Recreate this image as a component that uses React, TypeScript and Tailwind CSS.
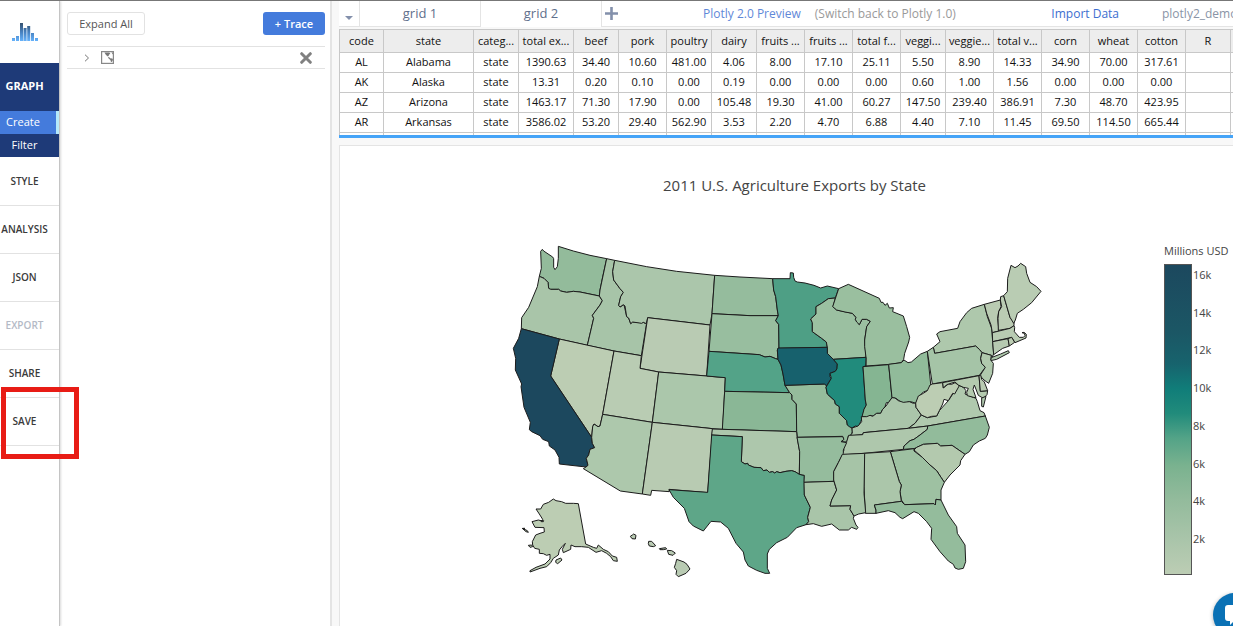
import React from "react";

const columns: { name: string; width: number }[] = [
  { name: "code", width: 44 },
  { name: "state", width: 90 },
  { name: "categ...", width: 45 },
  { name: "total ex...", width: 55 },
  { name: "beef", width: 45 },
  { name: "pork", width: 48 },
  { name: "poultry", width: 45 },
  { name: "dairy", width: 45 },
  { name: "fruits ...", width: 48 },
  { name: "fruits ...", width: 48 },
  { name: "total f...", width: 48 },
  { name: "veggi...", width: 45 },
  { name: "veggie...", width: 48 },
  { name: "total v...", width: 48 },
  { name: "corn", width: 48 },
  { name: "wheat", width: 48 },
  { name: "cotton", width: 48 },
  { name: "R", width: 45 },
  { name: "", width: 45 },
];

const rows: string[][] = [
  ["AL", "Alabama", "state", "1390.63", "34.40", "10.60", "481.00", "4.06", "8.00", "17.10", "25.11", "5.50", "8.90", "14.33", "34.90", "70.00", "317.61", "", ""],
  ["AK", "Alaska", "state", "13.31", "0.20", "0.10", "0.00", "0.19", "0.00", "0.00", "0.00", "0.60", "1.00", "1.56", "0.00", "0.00", "0.00", "", ""],
  ["AZ", "Arizona", "state", "1463.17", "71.30", "17.90", "0.00", "105.48", "19.30", "41.00", "60.27", "147.50", "239.40", "386.91", "7.30", "48.70", "423.95", "", ""],
  ["AR", "Arkansas", "state", "3586.02", "53.20", "29.40", "562.90", "3.53", "2.20", "4.70", "6.88", "4.40", "7.10", "11.45", "69.50", "114.50", "665.44", "", ""],
  Array(19).fill(""),
];

type Shape = { id: string; fill: string; d: string };
type Region = { shift: string; shapes: Shape[] };

// Each region keeps its outlines in local coordinates; `shift` moves it onto the map.
const regions: Region[] = [
  {
    shift: "translate(0 0)",
    shapes: [
      { id: "WA", fill: "#93bb9b", d: "M122,64 127,58 131,63 158,81 161,86 161,112 165,119 172,110 175,85 175,49 220,63 270,76 320,86 307,145 300,180 298,198 240,186 220,184 200,187 182,183 176,178 152,178 146,175 144,157 132,145 118,139 124,115Z" },
      { id: "OR", fill: "#a9c5a9", d: "M118,139 132,145 144,157 146,175 152,178 176,178 182,183 200,187 220,184 240,186 298,198 307,212 300,225 277,256 281,265 262,346 178,327 64,296 65,263 86,232 112,170Z" },
      { id: "ID", fill: "#a7c4a8", d: "M320,86 344,91 338,125 341,150 360,176 370,187 362,200 356,226 360,231 372,224 380,260 386,264 392,281 398,276 430,277 436,280 441,272 424,377 342,363 262,346 281,265 277,256 300,225 307,212 298,198 300,180Z" },
      { id: "MT", fill: "#abc6ab", d: "M344,91 440,110 530,124 644,136 636,251 630,285 443,263 439,281 430,277 425,280 398,276 392,281 386,264 380,260 375,228 370,224 360,231 356,226 362,200 370,187 360,176 341,150 338,125Z" },
      { id: "WY", fill: "#b9cbb3", d: "M443,263 630,285 620,438 476,426 420,415 433,330Z" },
      { id: "NV", fill: "#bccdb3", d: "M178,327 342,363 308,553 300,588 294,590 282,582 278,590 275,622 152,438Z" },
      { id: "UT", fill: "#b9ccb3", d: "M342,363 424,377 420,415 476,426 457,577 308,553Z" },
      { id: "CA", fill: "#1c485e", d: "M64,296 178,327 152,438 275,622 277,640 284,653 270,658 266,675 259,685 264,706 258,711 178,702 177,682 165,660 148,648 146,635 128,628 120,617 95,605 88,599 91,577 72,532 63,470 65,462 46,420 47,385 40,355 56,325Z" },
    ],
  },
  {
    shift: "translate(0 390)",
    shapes: [
      { id: "CO", fill: "#abc7ab", d: "M476,36 620,48 676,53 668,208 638,206 457,187Z" },
      { id: "AZ", fill: "#adc8ac", d: "M308,163 457,187 427,402 361,393 250,326 258,321 264,316 259,295 266,285 270,268 284,263 277,250 275,232 278,200 282,192 294,200 300,198Z" },
      { id: "NM", fill: "#b8cbb2", d: "M457,187 638,206 623,398 507,388 508,395 455,391 452,406 427,402Z" },
      { id: "AK", fill: "#bccdb3", d: "M108,447 122,447 130,433 146,427 160,417 168,422 185,425 197,430 220,430 235,431 246,492 257,552 280,562 290,565 295,555 310,568 325,575 337,588 350,592 352,604 340,602 332,590 320,580 305,572 288,577 265,562 245,560 225,560 213,555 212,568 190,578 187,568 196,550 187,559 178,570 175,585 160,595 152,608 140,620 120,625 90,636 90,632 108,622 135,612 150,597 150,583 140,586 130,581 118,580 118,568 104,565 98,555 97,545 107,525 120,520 133,516 132,503 105,502 96,485 115,480 126,483 128,478 118,462ZM67,505 82,512 85,517 78,515ZM85,556 95,555 98,560 90,562ZM168,600 182,594 186,600 173,611 167,607ZM122,482 131,482 130,485 124,485ZM68,506 73,504 74,509Z" },
      { id: "HI", fill: "#b9cbb3", d: "M391,529 397,525 401,522 408,526 406,537 396,536ZM446,544 455,544 467,557 460,560 448,558 445,551ZM478,566 497,563 500,567 490,569 480,569ZM502,571 515,572 526,579 519,586 506,583ZM530,598 552,606 561,613 570,627 558,640 535,650 528,643 530,632 523,622 527,610Z" },
    ],
  },
  {
    shift: "translate(570 0)",
    shapes: [
      { id: "ND", fill: "#95bc9d", d: "M74,136 150,141 248,146 251,180 257,200 262,240 265,257 180,257 66,251Z" },
      { id: "SD", fill: "#98be9f", d: "M66,251 180,257 265,257 257,272 266,283 267,352 262,360 264,388 257,386 240,379 225,381 208,374 57,364Z" },
      { id: "NE", fill: "#53a388", d: "M57,364 208,374 225,381 240,379 257,386 264,388 273,405 279,432 285,466 299,488 104,484 106,443 50,438Z" },
      { id: "KS", fill: "#8ab796", d: "M104,484 299,488 306,495 306,508 319,522 320,605 97,598Z" },
      { id: "MN", fill: "#4e9f85", d: "M248,146 300,146 301,128 310,129 311,142 315,153 322,156 345,159 372,166 392,174 412,168 446,176 436,204 415,206 395,220 378,230 378,252 362,267 367,278 367,305 395,325 409,336 412,352 267,355 266,283 257,272 265,257 262,240 257,200 251,180Z" },
      { id: "WI", fill: "#9bc0a1", d: "M436,204 429,230 440,240 487,250 498,262 496,268 508,284 516,268 530,268 541,274 530,290 524,330 528,382 430,388 412,370 412,352 409,336 395,325 367,305 367,278 362,267 378,252 378,230 395,220 415,206Z" },
      { id: "MI", fill: "#9abf9f", d: "M446,176 475,163 568,205 573,217 579,217 585,226 592,220 598,234 610,233 608,245 640,258 650,290 659,322 656,336 644,370 641,388 634,398 600,403 528,408 528,382 524,350 524,330 530,290 541,274 530,268 516,268 508,284 500,276 496,268 498,262 487,250 465,246 440,240 428,230Z" },
      { id: "MO", fill: "#95bc9c", d: "M285,466 403,462 410,467 408,472 412,492 434,512 436,522 448,530 448,550 470,570 472,585 486,592 487,605 484,615 475,618 473,630 468,636 453,635 460,625 458,619 322,622 320,605 319,522 306,508 306,495 299,488Z" },
      { id: "IA", fill: "#17616d", d: "M264,354 412,352 412,370 430,388 442,402 441,416 436,424 420,430 420,440 424,445 410,467 403,462 285,466 279,432 273,405 264,388 262,360Z" },
      { id: "IL", fill: "#218b7c", d: "M430,388 528,382 527,408 519,410 526,510 529,525 522,538 518,560 512,575 506,590 496,588 486,594 478,590 472,585 470,572 448,550 448,530 436,522 434,512 412,492 408,472 424,445 420,430 436,424 441,416 442,402Z" },
      { id: "IN", fill: "#85b592", d: "M519,410 596,404 606,503 596,518 589,518 585,530 577,540 572,550 560,550 550,558 540,556 534,562 516,560 522,538 529,525 526,510Z" },
    ],
  },
  {
    shift: "translate(1140 0)",
    shapes: [
      { id: "OH", fill: "#91bb9a", d: "M26,403 64,398 72,390 84,398 94,396 122,372 142,364 152,462 147,480 130,486 118,498 112,512 107,520 96,516 88,515 78,518 65,518 48,505 36,503Z" },
      { id: "NY", fill: "#aec8ac", d: "M160,352 180,335 170,312 180,305 233,295 240,275 260,248 275,235 313,223 322,260 335,295 338,335 341,372 336,382 362,372 385,362 388,368 350,388 332,392 334,376 306,368 298,358 287,348 164,370Z" },
      { id: "PA", fill: "#a5c4a7", d: "M142,364 160,352 164,370 287,348 298,358 306,368 302,385 305,400 316,412 298,436 157,462Z" },
      { id: "NJ", fill: "#b0c9ad", d: "M306,368 334,376 332,390 340,400 338,430 326,460 312,450 300,437 316,412 305,400 302,385Z" },
      { id: "VT", fill: "#b9cbb2", d: "M313,223 361,210 363,230 356,245 353,265 357,303 337,308 333,285 320,250Z" },
      { id: "NH", fill: "#bacbb3", d: "M361,210 362,200 371,197 390,262 402,276 402,287 390,295 355,301 354,265 356,245 365,230Z" },
      { id: "ME", fill: "#b9ccb3", d: "M371,197 382,185 383,145 393,106 405,113 414,108 422,100 437,110 440,130 450,157 470,170 483,184 455,218 430,238 412,250 406,270 401,280 390,262Z" },
      { id: "MA", fill: "#b8cbb2", d: "M337,308 390,295 402,287 404,292 403,305 418,322 430,322 435,317 433,310 426,308 432,307 439,313 438,324 405,338 395,322 338,335Z" },
      { id: "CT", fill: "#b6cab1", d: "M338,335 384,326 388,348 368,355 341,374Z" },
      { id: "RI", fill: "#bccdb3", d: "M384,326 395,322 404,337 388,348Z" },
    ],
  },
  {
    shift: "translate(1020 420)",
    shapes: [
      { id: "KY", fill: "#aac5aa", d: "M156,83 165,84 175,92 190,97 208,95 220,100 227,99 228,112 244,135 225,160 205,175 70,188 68,194 28,198 37,190 36,174 54,168 65,155 64,140 80,140 90,136 98,139 110,130 122,130 128,118 138,108 145,98Z" },
      { id: "VA", fill: "#b0c9ae", d: "M205,175 225,160 244,135 262,143 290,138 298,122 325,92 345,62 355,45 370,52 378,62 375,72 400,82 408,85 412,95 420,122 432,128 436,138 263,168Z" },
      { id: "WV", fill: "#bccdb3", d: "M227,99 235,78 250,70 262,62 270,45 277,42 308,38 310,54 325,42 335,43 345,38 358,47 344,72 338,70 325,92 312,88 308,102 298,122 290,138 275,139 262,143 244,135 228,112Z" },
      { id: "MD", fill: "#b4caaf", d: "M308,38 417,17 421,64 443,62 441,74 430,85 415,76 403,45 399,58 408,83 400,82 382,77 380,67 385,55 370,52 355,45 345,36 320,44 310,54Z" },
      { id: "DE", fill: "#b9cbb2", d: "M417,17 422,15 425,28 433,36 443,62 421,64Z" },
      { id: "VA-shore", fill: "#b0c9ae", d: "M425,84 438,79 430,111 425,109Z" },
      { id: "TN", fill: "#aec7ac", d: "M26,196 68,194 70,188 205,175 263,168 262,178 240,195 222,208 210,212 192,228 190,238 72,250 5,255 12,240 9,230 20,215Z" },
      { id: "NC", fill: "#92bb9b", d: "M263,168 436,138 448,172 442,195 436,205 418,213 400,225 388,245 375,253 336,226 302,228 292,220 250,223 222,236 190,238 192,228 210,212 222,208 240,195 262,178Z" },
      { id: "SC", fill: "#b3c9ae", d: "M222,240 230,232 250,223 292,220 302,228 336,226 375,253 362,272 360,285 345,300 330,315 313,337 303,322 290,302 270,285 247,262Z" },
      { id: "GA", fill: "#9ec1a2", d: "M151,245 222,236 222,243 247,262 270,285 290,302 303,322 313,337 303,360 303,390 288,388 286,405 282,401 194,404 184,390 180,365 184,345 178,335Z" },
      { id: "AL", fill: "#abc6aa", d: "M73,250 151,245 178,335 184,345 180,365 184,394 103,405 108,422 108,430 76,430 72,350Z" },
      { id: "FL", fill: "#94bc9c", d: "M103,405 184,394 194,404 282,401 286,405 288,388 303,390 325,435 350,470 352,490 375,525 377,575 370,595 355,598 345,594 340,583 325,573 300,545 273,508 275,475 260,455 235,430 222,425 188,446 180,442 165,428 145,422 108,430 108,420Z" },
    ],
  },
  {
    shift: "translate(540 570)",
    shapes: [
      { id: "OK", fill: "#adc7ac", d: "M97,27 350,35 351,50 359,95 358,163 345,155 335,152 318,154 300,158 290,155 284,159 278,155 268,157 261,150 250,152 243,143 222,142 205,135 203,130 195,132 184,125 187,50 95,45Z" },
      { id: "TX", fill: "#5ea688", d: "M95,45 187,50 184,125 195,132 203,130 205,135 222,142 243,143 250,152 261,150 268,157 278,155 284,159 290,155 300,158 318,154 335,152 345,155 358,163 373,166 373,225 391,262 383,292 386,305 378,314 350,323 322,352 290,368 268,388 262,402 262,445 269,460 255,460 230,451 205,438 195,420 190,396 168,370 145,325 122,306 93,304 70,333 40,318 27,305 13,265 -20,232 -33,209 83,217Z" },
      { id: "AR", fill: "#95bc9d", d: "M351,52 488,50 492,58 483,65 500,68 490,90 490,100 475,128 461,155 461,180 462,184 372,187 373,166 358,163 359,95Z" },
      { id: "LA", fill: "#a9c5a9", d: "M372,187 462,184 470,210 455,240 450,258 512,257 510,268 522,288 520,295 528,315 534,322 530,328 515,322 505,330 478,330 455,312 425,319 400,311 378,314 386,305 383,292 391,262 373,225Z" },
      { id: "MS", fill: "#a6c4a7", d: "M487,103 554,100 552,220 557,278 536,282 522,288 510,268 512,257 450,258 455,240 470,210 461,180 461,155 475,128Z" },
    ],
  },
];

const ticks = ["16k", "14k", "12k", "10k", "8k", "6k", "4k", "2k"];

function Logo() {
  return (
    <svg viewBox="0 0 26 18" className="h-[18px] w-[26px]" aria-hidden="true">
      <defs>
        <linearGradient id="bars" gradientUnits="userSpaceOnUse" x1="0" y1="0" x2="0" y2="18">
          <stop offset="0" stopColor="#35516f" />
          <stop offset="0.5" stopColor="#4780be" />
          <stop offset="1" stopColor="#66b2fb" />
        </linearGradient>
      </defs>
      <path
        fill="url(#bars)"
        d="M0 15h3v3H0zM4 13h3v5H4zM8 0h3v18H8zM11.6 5h3v13h-3zM15.2 3h3v15h-3zM19 10h3v8h-3zM23 15h3v3h-3z"
      />
      <path fill="#9cc4ea" d="M11 6h.6v12H11zM14.6 6h.6v12h-.6z" />
    </svg>
  );
}

function NavItem({ label, muted = false, marked = false }: { label: string; muted?: boolean; marked?: boolean }) {
  return (
    <div className="relative h-12 w-full border-b border-[#e2e2e2]">
      <button
        type="button"
        disabled={muted}
        className={`flex h-full w-[49px] items-center justify-center text-[10px] font-semibold ${muted ? "text-[#b4bac6]" : "text-[#3a3a3a]"}`}
      >
        {label}
      </button>
      {marked && <span className="pointer-events-none absolute -top-[11px] left-px h-[72px] w-[78px] border-[5px] border-[#e81c15]" />}
    </div>
  );
}

function Sidebar() {
  return (
    <nav className="relative z-10 w-[60px] shrink-0 border-r border-[#c4c4c4] bg-white shadow-[1px_0_2px_rgba(0,0,0,0.15)]">
      <div className="flex h-[62px] items-center justify-center pr-[9px] pb-px">
        <Logo />
      </div>
      <button type="button" className="flex h-12 w-full items-center justify-center bg-[#1e3a78] pr-[10px] pb-0.5 text-[11px] font-bold text-white">
        GRAPH
      </button>
      <button type="button" className="flex h-[23px] w-full items-center justify-center border-r-[3px] border-[#b5e8fa] bg-[#447bdc] pr-[10px] text-[11px] text-white">
        Create
      </button>
      <button type="button" className="flex h-[23px] w-full items-center justify-center bg-[#1e3a78] pr-[10px] text-[11px] text-white">
        Filter
      </button>
      <div className="pt-px">
        <NavItem label="STYLE" />
        <NavItem label="ANALYSIS" />
        <NavItem label="JSON" />
        <NavItem label="EXPORT" muted />
        <NavItem label="SHARE" />
        <NavItem label="SAVE" marked />
      </div>
    </nav>
  );
}

function TracePanel() {
  return (
    <aside className="w-[270px] shrink-0 bg-white pt-[11px] pr-[5px] pl-[7px]">
      <div className="flex items-center justify-between">
        <button type="button" className="h-[23px] w-[78px] rounded-[3px] border border-[#e2e2e2] pt-px text-[11px] text-[#555]">
          Expand All
        </button>
        <button type="button" className="h-[23px] w-[62px] rounded-[3px] bg-[#447bdc] pt-px text-[11px] font-semibold text-white">
          + Trace
        </button>
      </div>
      <div className="mt-[11px] flex h-[23px] items-center border-y border-[#e2e2e2] pr-[13px] pl-[17px]">
        <button type="button" aria-label="Expand trace">
          <svg viewBox="0 0 6 8" className="h-2 w-[6px]" fill="none" stroke="#777">
            <path d="M1 .7 4.5 4 1 7.3" />
          </svg>
        </button>
        <svg viewBox="0 0 13 13" className="ml-[11px] h-[13px] w-[13px]" aria-hidden="true">
          <rect x=".6" y=".6" width="11.8" height="11.8" fill="none" stroke="#888" strokeWidth="1.2" />
          <path fill="#777" d="M3.4 1.4h5L9.4 3 8 3.4 7.6 5 6.8 5.4 5 4zM7 6l1.4.2L9 7.3l2.4.2.6 1.2-1 2-1 .3-.6-2L7.6 7.6zM10.4 1.4H12v2.2z" />
        </svg>
        <button type="button" aria-label="Remove trace" className="ml-auto">
          <svg viewBox="0 0 12 12" className="h-3 w-3" stroke="#808080" strokeWidth="3" strokeLinecap="round">
            <path d="M1.7 1.7l8.6 8.6M10.3 1.7l-8.6 8.6" />
          </svg>
        </button>
      </div>
    </aside>
  );
}

function TabBar() {
  return (
    <div className="flex h-[26px] items-stretch bg-white text-xs whitespace-nowrap">
      <button type="button" aria-label="List grids" className="flex w-[21px] shrink-0 items-center justify-center border-r border-b border-[#e4e4e4] pt-2">
        <span className="border-x-4 border-t-4 border-x-transparent border-t-[#8390ab]" />
      </button>
      <button type="button" className="w-[121px] shrink-0 border-r border-b border-[#e4e4e4] text-[13px] text-[#5f6f8c]">
        grid 1
      </button>
      <button type="button" className="w-[121px] shrink-0 border-r border-[#e4e4e4] text-[13px] text-[#5f6f8c]">
        grid 2
      </button>
      <div className="flex min-w-0 flex-1 items-center border-b border-[#e4e4e4]">
        <button type="button" aria-label="Add grid" className="ml-[3px] shrink-0">
          <svg viewBox="0 0 13 13" className="h-[13px] w-[13px]" stroke="#8390ab" strokeWidth="2.6">
            <path d="M6.5 0v13M0 6.5h13" />
          </svg>
        </button>
        <a href="#preview" className="ml-[85px] font-medium text-[#5f88d8]">Plotly 2.0 Preview</a>
        <a href="#classic" className="ml-[14px] text-[#999]">(Switch back to Plotly 1.0)</a>
        <a href="#import" className="ml-auto font-medium text-[#3c6ed0]">Import Data</a>
        <span className="ml-[43px] w-[71px] overflow-hidden text-[#8a94a6]">plotly2_demo</span>
      </div>
    </div>
  );
}

function DataGrid() {
  return (
    <div className="mt-[2px] h-[109px] overflow-hidden border-b-[3px] border-[#45a4f8]">
      <table className="w-[937px] table-fixed border-collapse bg-white text-center text-[11px] text-[#111]">
        <colgroup>
          {columns.map((c, i) => (
            <col key={i} style={{ width: c.width }} />
          ))}
        </colgroup>
        <thead>
          <tr className="h-[23px] bg-[#ededed]">
            {columns.map((c, i) => (
              <th key={i} className="border border-[#c8c8c8] p-0 font-normal whitespace-nowrap">
                {c.name}
              </th>
            ))}
          </tr>
        </thead>
        <tbody>
          {rows.map((r, i) => (
            <tr key={i} className="h-5">
              {r.map((v, j) => (
                <td key={j} className="border border-[#c8c8c8] p-0 whitespace-nowrap">
                  {v}
                </td>
              ))}
            </tr>
          ))}
        </tbody>
      </table>
    </div>
  );
}

function Chart() {
  return (
    <section className="mt-[7px] flex-1 border-t border-l border-[#e4e4e4] bg-white">
      <h1 className="pt-7 pl-4 text-center text-[15px] leading-[22px] text-[#444]">2011 U.S. Agriculture Exports by State</h1>
      <div className="mt-[34px] flex">
        <div className="flex flex-1 justify-center pl-14">
          <svg viewBox="0 0 1680 1080" className="h-[360px] w-[560px] shrink-0" role="img" aria-label="Exports by state">
            {regions.map((r) => (
              <g key={r.shift} transform={r.shift} stroke="#1c1c1c" strokeWidth="3" strokeLinejoin="round">
                {r.shapes.map((s) => (
                  <path key={s.id} fill={s.fill} d={s.d} />
                ))}
              </g>
            ))}
          </svg>
        </div>
        <div className="w-[69px] shrink-0 pt-[13px] text-[11px] leading-4 text-[#444]">
          <p className="whitespace-nowrap">Millions USD</p>
          <div className="mt-[5px] flex">
            <div className="h-[311px] w-7 border border-[#555] bg-[linear-gradient(to_bottom,#1c485e_0%,#1b5765_22%,#17636d_32%,#107d79_40%,#218b7b_48%,#53a387_56%,#7ab28f_65%,#93bb9c_76%,#a8c4a9_88%,#bccdb4_100%)]" />
            <ul className="flex h-[283px] flex-col justify-between pt-[3px] pl-px">
              {ticks.map((t) => (
                <li key={t}>{t}</li>
              ))}
            </ul>
          </div>
        </div>
      </div>
    </section>
  );
}

export default function App() {
  return (
    <div className="relative flex h-screen overflow-hidden border-t border-[#777] bg-[#f8f8f8] font-['Open_Sans',sans-serif]">
      <Sidebar />
      <TracePanel />
      <main className="flex min-w-0 flex-1 flex-col border-l-2 border-[#e4e4e4] pl-[7px]">
        <TabBar />
        <DataGrid />
        <Chart />
      </main>
      <button
        type="button"
        aria-label="Open chat"
        className="absolute -right-6 -bottom-[11px] flex h-11 w-11 items-center rounded-full bg-[#0a71b5] pl-3 shadow-[0_1px_4px_rgba(0,0,0,0.3)]"
      >
        <svg viewBox="0 0 20 20" className="h-5 w-5" fill="#fff">
          <path d="M3 0h14a3 3 0 0 1 3 3v10a3 3 0 0 1-3 3H9l-4 4v-4H3a3 3 0 0 1-3-3V3a3 3 0 0 1 3-3z" />
        </svg>
      </button>
    </div>
  );
}
